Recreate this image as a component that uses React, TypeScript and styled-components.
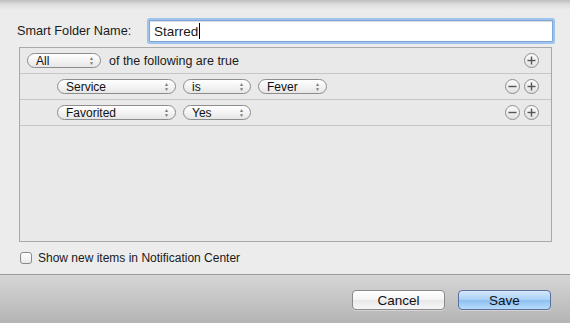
import React from 'react'
import styled, { createGlobalStyle } from 'styled-components'

const GlobalStyle = createGlobalStyle`
  *, *::before, *::after { box-sizing: border-box; }
  html, body {
    margin: 0;
    padding: 0;
    background: #ececec;
    font-family: 'Liberation Sans', Arial, sans-serif;
    color: #1a1a1a;
  }
`

const Sheet = styled.div`
  width: 570px;
  height: 323px;
  display: flex;
  flex-direction: column;
  overflow: hidden;
`

const Body = styled.div`
  flex: 1;
  display: flex;
  flex-direction: column;
  padding: 19px 18px 0 19px;
  background: linear-gradient(to bottom, #bdbdbd 0px, #dcdcdc 4px, #ebebeb 10px, #ececec 20px);
`

const NameRow = styled.div`
  display: flex;
  align-items: center;
  height: 24px;
`

const Label = styled.span`
  font-size: 12.7px;
  width: 132px;
  margin-left: -2px;
`

const NameInput = styled.div`
  flex: 1;
  height: 22px;
  margin-right: -1px;
  background: #fff;
  border: 1px solid #7fa6d6;
  box-shadow: 0 0 0 2px #9ec3ec, inset 0 1px 1px rgba(0, 0, 0, 0.15);
  border-radius: 1px;
  display: flex;
  align-items: center;
  padding-left: 4px;
  font-size: 13.5px;
`

const Caret = styled.span`
  display: inline-block;
  width: 1px;
  height: 16px;
  background: #000;
  margin-left: 1px;
`

const RuleBox = styled.div`
  margin-top: 4px;
  height: 195px;
  border: 1px solid #a9a9a9;
  background: #e9e9e9;
  display: flex;
  flex-direction: column;
`

const RuleRow = styled.div<{ $indent?: boolean }>`
  height: 26px;
  flex: none;
  display: flex;
  align-items: center;
  gap: 7px;
  padding-left: ${(p) => (p.$indent ? '37px' : '7px')};
  padding-right: 12px;
  border-bottom: 1px solid #c6c6c6;
  font-size: 12.5px;
`

const Popup = styled.div<{ $w: number }>`
  width: ${(p) => p.$w}px;
  height: 15px;
  border: 1px solid #8d8d8d;
  border-radius: 8px;
  background: linear-gradient(to bottom, #ffffff, #f1f1f1 60%, #e6e6e6);
  display: flex;
  align-items: center;
  justify-content: space-between;
  padding: 0 6px 0 8px;
  font-size: 12px;
  line-height: 1;
  color: #111;
`

const Arrows = styled.span`
  display: flex;
  flex-direction: column;
  gap: 1px;
  color: #7a7a7a;
  font-size: 5px;
  line-height: 4px;
`

const RowText = styled.span`
  margin-left: 1px;
`

const Controls = styled.div`
  margin-left: auto;
  display: flex;
  gap: 4px;
`

const RoundButton = styled.div`
  width: 15px;
  height: 15px;
  border-radius: 50%;
  border: 1px solid #8e8e8e;
  background: linear-gradient(to bottom, #fbfbfb, #e2e2e2);
  display: flex;
  align-items: center;
  justify-content: center;
`

const CheckRow = styled.div`
  display: flex;
  align-items: center;
  gap: 6px;
  margin-top: 9px;
  font-size: 12px;
  padding-left: 1px;
`

const Checkbox = styled.div`
  width: 12px;
  height: 12px;
  border: 1px solid #8a8a8a;
  border-radius: 3px;
  background: linear-gradient(to bottom, #ffffff, #eaeaea);
`

const Footer = styled.div`
  height: 49px;
  flex: none;
  border-top: 1px solid #9b9b9b;
  background: linear-gradient(to bottom, #d6d6d6, #c2c2c2 60%, #b4b4b4);
  display: flex;
  justify-content: flex-end;
  align-items: flex-start;
  gap: 13px;
  padding: 15px 19px 0 0;
`

const Button = styled.div<{ $primary?: boolean }>`
  width: 93px;
  height: 20px;
  border-radius: 4px;
  border: 1px solid ${(p) => (p.$primary ? '#5d6f9c' : '#8a8a8a')};
  background: ${(p) =>
    p.$primary
      ? 'linear-gradient(to bottom, #d4e7fb 0%, #a8d0f6 50%, #8cc0f2 51%, #b7dcfa 100%)'
      : 'linear-gradient(to bottom, #ffffff 0%, #f4f4f4 50%, #e8e8e8 51%, #f6f6f6 100%)'};
  box-shadow: 0 1px 0 rgba(255, 255, 255, 0.35);
  display: flex;
  align-items: center;
  justify-content: center;
  font-size: 13.5px;
  color: #111;
`

const PopupArrows = () => (
  <Arrows>
    <span>▲</span>
    <span>▼</span>
  </Arrows>
)

const PlusMinus = ({ kind }: { kind: 'plus' | 'minus' }) => (
  <RoundButton>
    <svg width="9" height="9" viewBox="0 0 9 9">
      <line x1="0.5" y1="4.5" x2="8.5" y2="4.5" stroke="#555" strokeWidth="1.4" />
      {kind === 'plus' && <line x1="4.5" y1="0.5" x2="4.5" y2="8.5" stroke="#555" strokeWidth="1.4" />}
    </svg>
  </RoundButton>
)

const App = () => {
  return (
    <Sheet>
      <GlobalStyle />
      <Body>
        <NameRow>
          <Label>Smart Folder Name:</Label>
          <NameInput>
            Starred
            <Caret />
          </NameInput>
        </NameRow>
        <RuleBox>
          <RuleRow>
            <Popup $w={74}>
              All
              <PopupArrows />
            </Popup>
            <RowText>of the following are true</RowText>
            <Controls>
              <PlusMinus kind="plus" />
            </Controls>
          </RuleRow>
          <RuleRow $indent>
            <Popup $w={119}>
              Service
              <PopupArrows />
            </Popup>
            <Popup $w={68}>
              is
              <PopupArrows />
            </Popup>
            <Popup $w={69}>
              Fever
              <PopupArrows />
            </Popup>
            <Controls>
              <PlusMinus kind="minus" />
              <PlusMinus kind="plus" />
            </Controls>
          </RuleRow>
          <RuleRow $indent>
            <Popup $w={119}>
              Favorited
              <PopupArrows />
            </Popup>
            <Popup $w={68}>
              Yes
              <PopupArrows />
            </Popup>
            <Controls>
              <PlusMinus kind="minus" />
              <PlusMinus kind="plus" />
            </Controls>
          </RuleRow>
        </RuleBox>
        <CheckRow>
          <Checkbox />
          Show new items in Notification Center
        </CheckRow>
      </Body>
      <Footer>
        <Button>Cancel</Button>
        <Button $primary>Save</Button>
      </Footer>
    </Sheet>
  )
}

export default App
